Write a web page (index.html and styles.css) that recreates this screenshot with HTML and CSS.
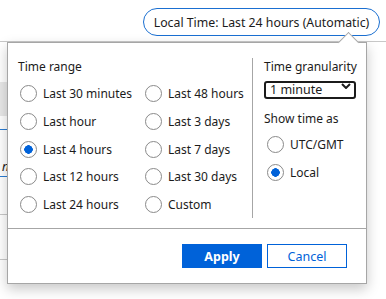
FILE: index.html
```html
<!DOCTYPE html>
<html lang="en">
<head>
    <meta charset="UTF-8">
    <title>Time range</title>
    <link rel="stylesheet" href="styles.css">
</head>
<body>
    <div class="topbar">
        <button type="button" class="pill">Local Time: Last 24 hours (Automatic)</button>
    </div>

    <!-- page content peeking out behind the flyout -->
    <div class="backdrop">
        <div class="bg-box"></div>
        <div class="bg-line blue l1"></div>
        <div class="bg-char">n</div>
        <div class="bg-line blue l2"></div>
        <div class="bg-line gray l3"></div>
        <div class="bg-line gray l4"></div>
    </div>

    <div class="flyout">
        <div class="arrow"></div>
        <div class="flyout-body">
            <div class="range">
                <div class="heading">Time range</div>
                <div class="range-grid">
                    <label class="radio"><input type="radio" name="range"><span>Last 30 minutes</span></label>
                    <label class="radio"><input type="radio" name="range"><span>Last 48 hours</span></label>
                    <label class="radio"><input type="radio" name="range"><span>Last hour</span></label>
                    <label class="radio"><input type="radio" name="range"><span>Last 3 days</span></label>
                    <label class="radio"><input type="radio" name="range" checked><span>Last 4 hours</span></label>
                    <label class="radio"><input type="radio" name="range"><span>Last 7 days</span></label>
                    <label class="radio"><input type="radio" name="range"><span>Last 12 hours</span></label>
                    <label class="radio"><input type="radio" name="range"><span>Last 30 days</span></label>
                    <label class="radio"><input type="radio" name="range"><span>Last 24 hours</span></label>
                    <label class="radio"><input type="radio" name="range"><span>Custom</span></label>
                </div>
            </div>
            <div class="options">
                <div class="heading">Time granularity</div>
                <div class="select-wrap">
                    <select class="select">
                        <option>1 minute</option>
                        <option>5 minutes</option>
                        <option>1 hour</option>
                    </select>
                    <svg class="chevron" width="10" height="6" viewBox="0 0 10 6"><path d="M1 1 L5 5 L9 1" fill="none" stroke="#1b1b1b" stroke-width="2"/></svg>
                </div>
                <div class="heading show">Show time as</div>
                <div class="zone-list">
                    <label class="radio"><input type="radio" name="zone"><span>UTC/GMT</span></label>
                    <label class="radio"><input type="radio" name="zone" checked><span>Local</span></label>
                </div>
            </div>
        </div>
        <div class="flyout-footer">
            <button type="button" class="btn primary">Apply</button>
            <button type="button" class="btn secondary">Cancel</button>
        </div>
    </div>
</body>
</html>
```

FILE: styles.css
```css
body {
    margin: 0;
    width: 386px;
    height: 299px;
    overflow: hidden;
    background: #fff;
    font-family: "Noto Sans", "Open Sans", sans-serif;
    color: #1b1b1b;
    position: relative;
}
.topbar {
    height: 42px;
    box-sizing: border-box;
    display: flex;
    justify-content: flex-end;
    align-items: flex-start;
    padding: 8px 6px 0 0;
    border-bottom: 1px solid #c8c8c8;
}
.pill {
    height: 28px;
    width: 237px;
    padding: 0;
    background: #fff;
    border: 1.5px solid #1a6fd1;
    border-radius: 14px;
    font-family: inherit;
    font-size: 12.3px;
    color: #1b1b1b;
}
.backdrop {
    width: 7px;
    height: 256px;
    position: relative;
}
.bg-box {
    position: absolute;
    left: 0;
    top: 40px;
    width: 7px;
    height: 34px;
    background: #e8e8e8;
}
.bg-line {
    position: absolute;
    left: 0;
    width: 7px;
    height: 1px;
}
.bg-line.blue { background: #2b7cd3; }
.bg-line.gray { background: #c8c8c8; }
.l1 { top: 87px; }
.l2 { top: 134px; }
.l3 { top: 172px; }
.l4 { top: 217px; }
.bg-char {
    position: absolute;
    left: 2px;
    top: 116px;
    font-size: 12px;
    font-style: italic;
}
.flyout {
    position: absolute;
    left: 7px;
    top: 42px;
    width: 360px;
    height: 242px;
    box-sizing: border-box;
    background: #fff;
    border: 1px solid #a6a6a6;
    box-shadow: 0 5px 12px rgba(0, 0, 0, 0.22);
    display: flex;
    flex-direction: column;
}
.arrow {
    position: absolute;
    left: 333px;
    top: -8px;
    width: 14px;
    height: 14px;
    background: #fff;
    border-top: 1px solid #a6a6a6;
    border-left: 1px solid #a6a6a6;
    transform: rotate(45deg);
}
.flyout-body {
    display: flex;
    height: 186px;
    padding-top: 15px;
    box-sizing: border-box;
    border-bottom: 1px solid #a6a6a6;
}
.heading {
    font-size: 12px;
    line-height: 18px;
}
.range {
    width: 245px;
    padding-left: 10px;
    box-sizing: border-box;
    border-right: 1px solid #a6a6a6;
    margin-bottom: 10px;
}
.range-grid {
    display: grid;
    grid-template-columns: 125px 110px;
    grid-auto-rows: 27.7px;
    margin-top: 4px;
    margin-left: 2px;
}
.radio {
    display: flex;
    align-items: center;
    gap: 6px;
    font-size: 12px;
}
.radio input {
    appearance: none;
    margin: 0;
    width: 17px;
    height: 17px;
    border: 1px solid #8a8a8a;
    border-radius: 50%;
    background: #fff;
    box-sizing: border-box;
}
.radio input:checked {
    background: radial-gradient(circle, #0062d9 0 4px, #fff 4.5px);
}
.options {
    padding-left: 11px;
}
.select-wrap {
    position: relative;
    width: 92px;
    margin-top: 1px;
}
.select {
    appearance: none;
    width: 92px;
    height: 18px;
    padding: 0 0 0 4px;
    border: 2px solid #1b1b1b;
    border-radius: 3px;
    background: #fff;
    font-family: inherit;
    font-size: 12.5px;
    line-height: 14px;
    color: #1b1b1b;
}
.chevron {
    position: absolute;
    right: 5px;
    top: 6px;
}
.show {
    margin-top: 11px;
}
.zone-list {
    display: flex;
    flex-direction: column;
    margin-top: 2px;
    margin-left: 3px;
}
.zone-list .radio {
    height: 28px;
}
.flyout-footer {
    display: flex;
    justify-content: flex-end;
    gap: 5px;
    padding: 15px 19px 0 0;
}
.btn {
    width: 80px;
    height: 24px;
    font-family: inherit;
    font-size: 12.5px;
    padding: 0;
}
.btn.primary {
    background: #0062d9;
    border: none;
    color: #fff;
    font-weight: bold;
}
.btn.secondary {
    background: #fff;
    border: 1.5px solid #0062d9;
    color: #0062d9;
}
```
